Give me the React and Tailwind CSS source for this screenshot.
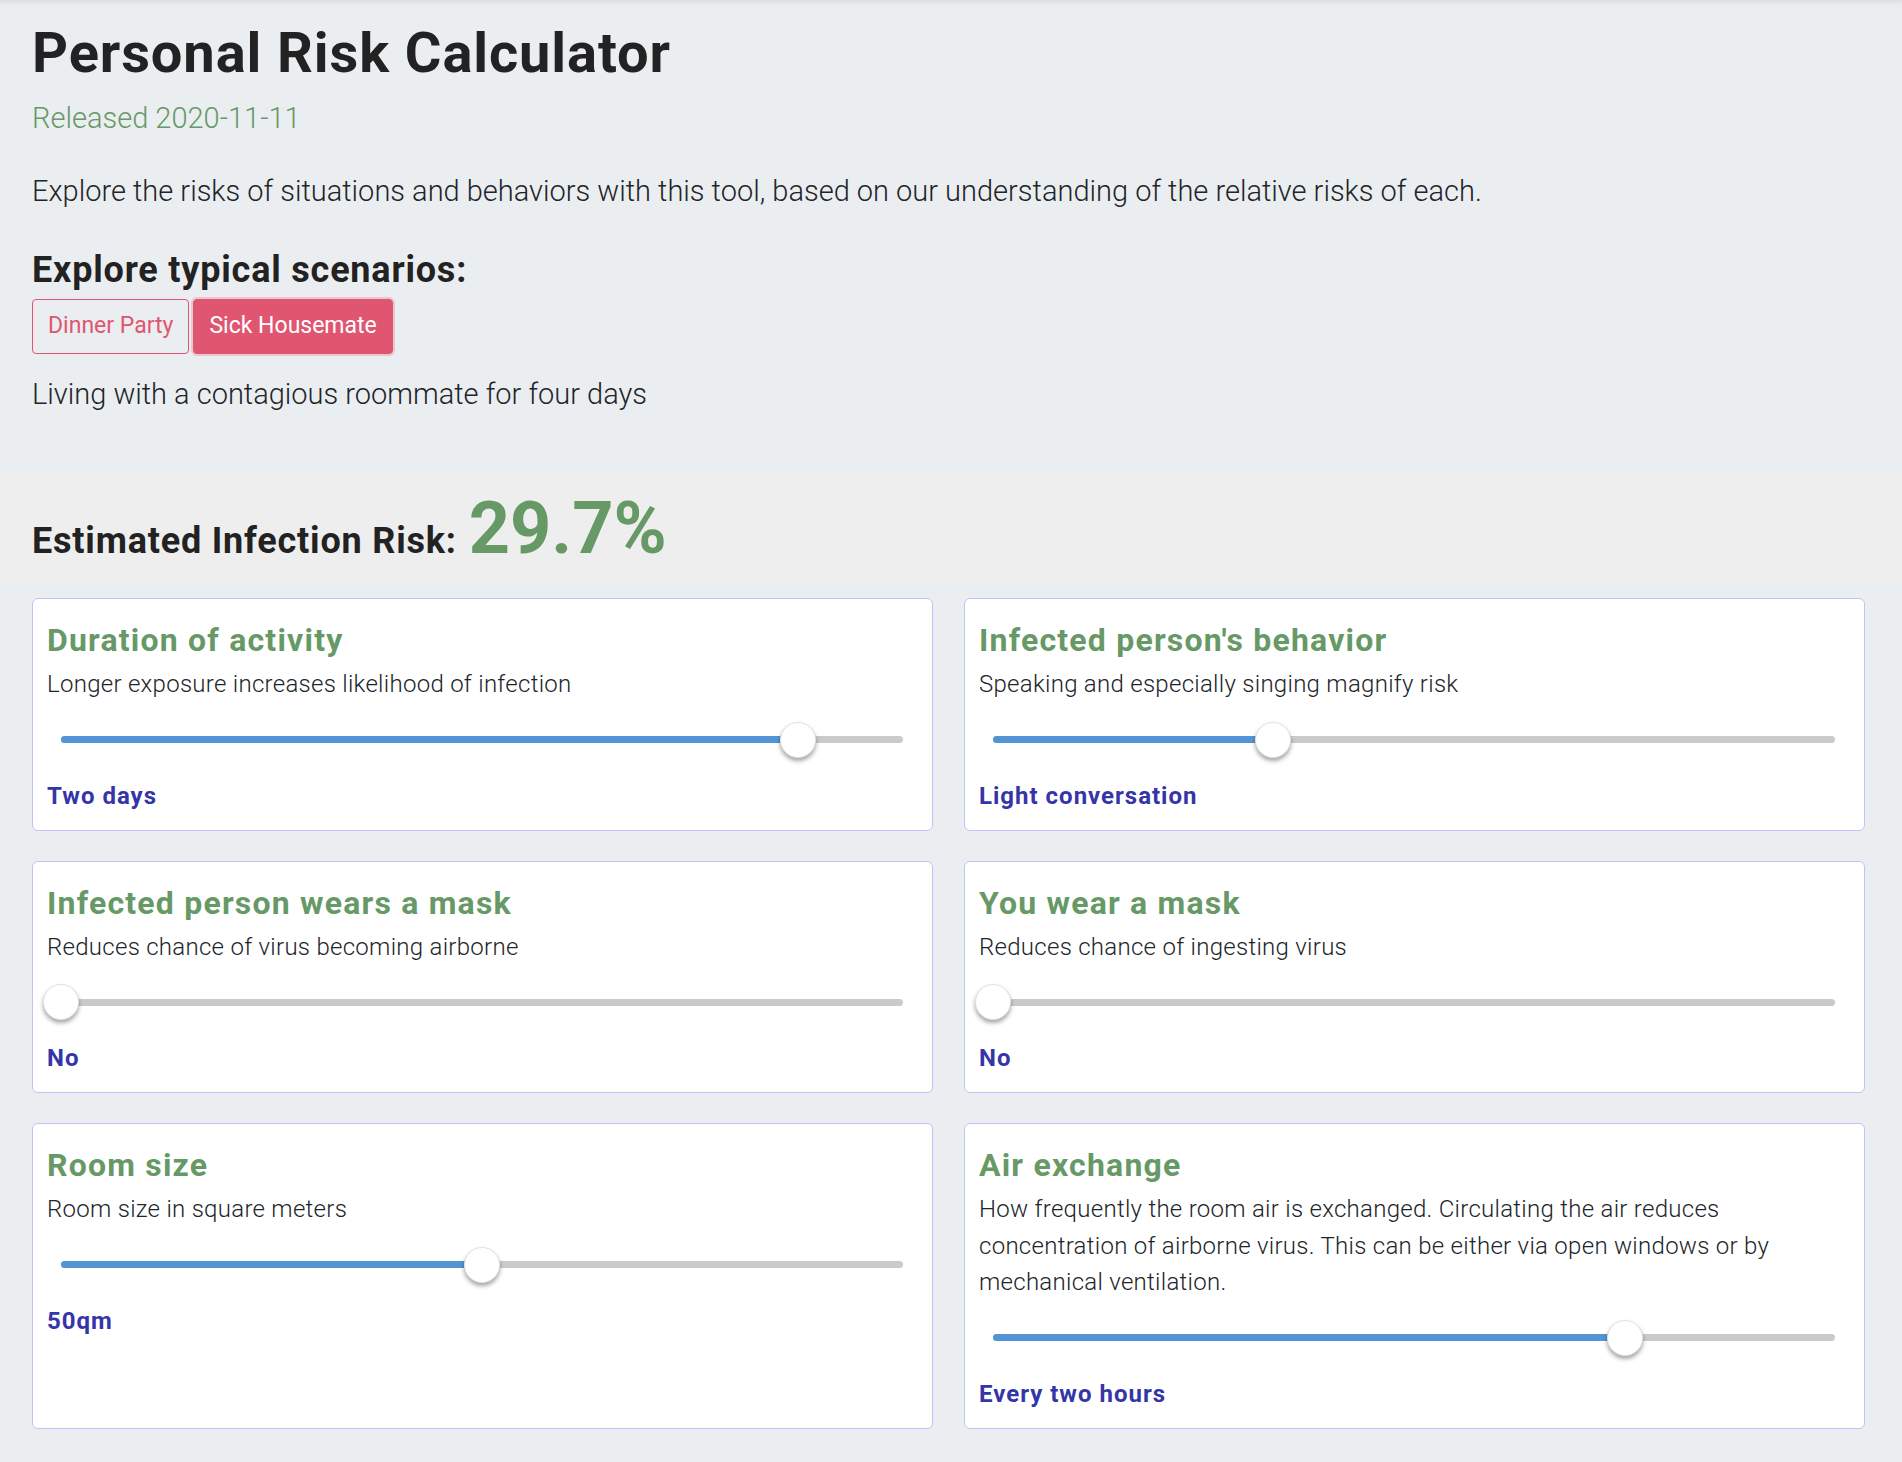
import { useState } from 'react'

const factors = [
  { title: 'Duration of activity', desc: 'Longer exposure increases likelihood of infection', value: 'Two days', pct: 87.5 },
  { title: "Infected person's behavior", desc: 'Speaking and especially singing magnify risk', value: 'Light conversation', pct: 33.3 },
  { title: 'Infected person wears a mask', desc: 'Reduces chance of virus becoming airborne', value: 'No', pct: 0 },
  { title: 'You wear a mask', desc: 'Reduces chance of ingesting virus', value: 'No', pct: 0 },
  { title: 'Room size', desc: 'Room size in square meters', value: '50qm', pct: 50 },
  {
    title: 'Air exchange',
    desc: 'How frequently the room air is exchanged. Circulating the air reduces concentration of airborne virus. This can be either via open windows or by mechanical ventilation.',
    value: 'Every two hours',
    pct: 75,
  },
]

function Slider({ pct }) {
  return (
    <div className="relative h-[36px] mt-[19px] ml-[14px] mr-[15px] flex items-center">
      <div className="w-full h-[7px] rounded-full bg-[#cacaca] overflow-hidden">
        <div className="h-full bg-[#5294d4]" style={{ width: `${pct}%` }} />
      </div>
      <div
        className="absolute top-0 w-[36px] h-[36px] -translate-x-1/2 rounded-full bg-white border border-[#e2e2e2] shadow-[0_3px_4px_rgba(0,0,0,0.35)]"
        style={{ left: `${pct}%` }}
      />
    </div>
  )
}

function FactorCard({ f }) {
  return (
    <div className="bg-white border border-[#c2c2f8] rounded-[6px] px-[14px] pt-[22px] pb-[16px]">
      <h3 className="text-[32px] leading-[38px] font-bold tracking-[1.2px] text-[#669966]">{f.title}</h3>
      <p className="mt-[7px] text-[24px] leading-[36.5px] font-light tracking-[0.28px] text-[#212529]">{f.desc}</p>
      <Slider pct={f.pct} />
      <p className="mt-[20px] text-[24px] leading-[36px] font-bold tracking-[1px] text-[#3535a8]">{f.value}</p>
    </div>
  )
}

export default function App() {
  const [scenario, setScenario] = useState('sick')

  return (
    <div className="min-h-[1462px] bg-[#ebeef1] text-[#212529] font-['Roboto','Liberation_Sans',sans-serif] shadow-[inset_0_5px_5px_-3px_rgba(0,0,0,0.08)]">
      <div className="pl-[32px] pr-[37px] pt-[20px]">
        <h1 className="text-[56px] leading-[67px] font-bold tracking-[0.9px] text-[#222]">Personal Risk Calculator</h1>
        <p className="mt-[11px] text-[29px] leading-[40px] font-light text-[#669966]">Released 2020-11-11</p>
        <p className="mt-[33px] text-[29px] leading-[40px] font-light">
          Explore the risks of situations and behaviors with this tool, based on our understanding of the relative risks of each.
        </p>
        <h2 className="mt-[38px] text-[36px] leading-[43px] font-bold tracking-[0.8px] text-[#222]">Explore typical scenarios:</h2>
        <div className="mt-[7px] flex gap-[4px]">
          <button
            onClick={() => setScenario('dinner')}
            className={`h-[55px] px-[15px] rounded-[4px] border border-[#e05570] text-[23px] font-normal ${scenario === 'dinner' ? 'bg-[#e05570] text-white shadow-[0_0_0_2px_rgba(224,85,112,0.25)]' : 'text-[#e05570]'}`}
          >
            Dinner Party
          </button>
          <button
            onClick={() => setScenario('sick')}
            className={`h-[55px] px-[15px] rounded-[4px] border border-[#e05570] text-[23px] font-normal ${scenario === 'sick' ? 'bg-[#e05570] text-white shadow-[0_0_0_2px_rgba(224,85,112,0.25)]' : 'text-[#e05570]'}`}
          >
            Sick Housemate
          </button>
        </div>
        <p className="mt-[20px] text-[29px] leading-[40px] font-light">Living with a contagious roommate for four days</p>
      </div>

      <div className="mt-[59px] bg-[#eeeeee] pl-[32px] pt-[20px] pb-[18px] flex items-baseline gap-[12px]">
        <h2 className="text-[36px] leading-[43px] font-bold tracking-[0.8px] text-[#222]">Estimated Infection Risk:</h2>
        <span className="text-[72px] leading-[72px] font-bold text-[#669966]">29.7%</span>
      </div>

      <div className="mt-[15px] pl-[32px] pr-[37px] pb-[35px] grid grid-cols-2 gap-x-[31px] gap-y-[30px]">
        {factors.map(f => <FactorCard key={f.title} f={f} />)}
      </div>
    </div>
  )
}
